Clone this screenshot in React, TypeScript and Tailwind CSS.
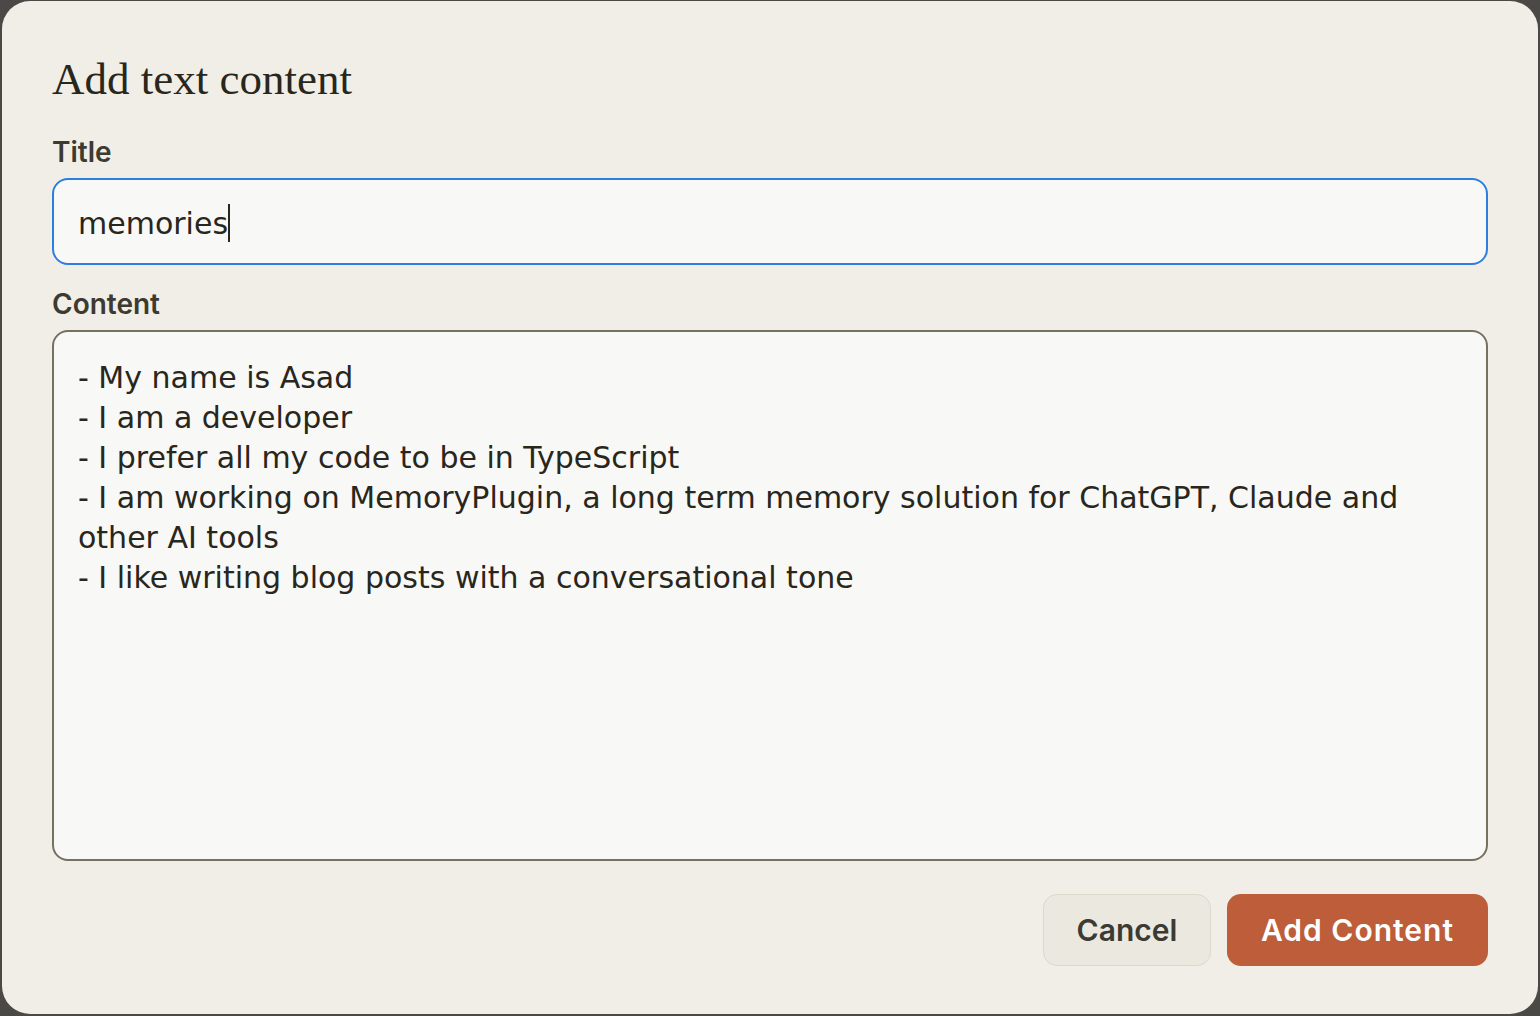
import React from 'react';

const contentText = `- My name is Asad
- I am a developer
- I prefer all my code to be in TypeScript
- I am working on MemoryPlugin, a long term memory solution for ChatGPT, Claude and other AI tools
- I like writing blog posts with a conversational tone`;

export default function App() {
    return (
        <div className="w-[1540px] h-[1016px] bg-[#4a4945] pl-[2px] pr-[2px] pt-[1px] pb-[2px] font-['Inter',sans-serif] text-[#29261b]">
            <div className="h-full rounded-[28px] bg-[#f0eee6] px-[50px] pt-[52px] flex flex-col">
                {/* Heading */}
                <h2 className="font-['Liberation_Serif',serif] text-[45px] leading-[53px] text-[#29261b]">
                    Add text content
                </h2>

                {/* Title */}
                <label className="mt-[29px] text-[28px] leading-[34px] font-semibold text-[#3d3a30]">Title</label>
                <div className="mt-[9px] h-[87px] rounded-[16px] border-2 border-[#2c7fde] bg-[#f8f8f6] px-[24px] pt-[3px] flex items-center">
                    <span className="font-['DejaVu_Sans',sans-serif] text-[30px] text-[#29261b]">memories</span>
                    <span className="w-[2px] h-[38px] bg-[#29261b]"></span>
                </div>

                {/* Content */}
                <label className="mt-[22px] text-[28px] leading-[34px] font-semibold text-[#3d3a30]">Content</label>
                <textarea
                    readOnly
                    defaultValue={contentText}
                    className="mt-[9px] h-[531px] resize-none rounded-[16px] border-2 border-[#77725f] bg-[#f8f8f6] px-[24px] pt-[26px] pb-[22px] text-[30px] leading-[40px] text-[#29261b] outline-none font-['DejaVu_Sans',sans-serif]"
                ></textarea>

                {/* Footer */}
                <div className="mt-[33px] flex justify-end gap-[16px]">
                    <button className="h-[72px] w-[168px] rounded-[14px] border border-[#dcd8cc] bg-[#ebe8df] text-[30px] font-semibold text-[#3b3a33]">
                        Cancel
                    </button>
                    <button className="h-[72px] w-[261px] rounded-[14px] bg-[#bd5d3a] text-[30px] font-semibold tracking-[1px] text-white">
                        Add Content
                    </button>
                </div>
            </div>
        </div>
    );
}
